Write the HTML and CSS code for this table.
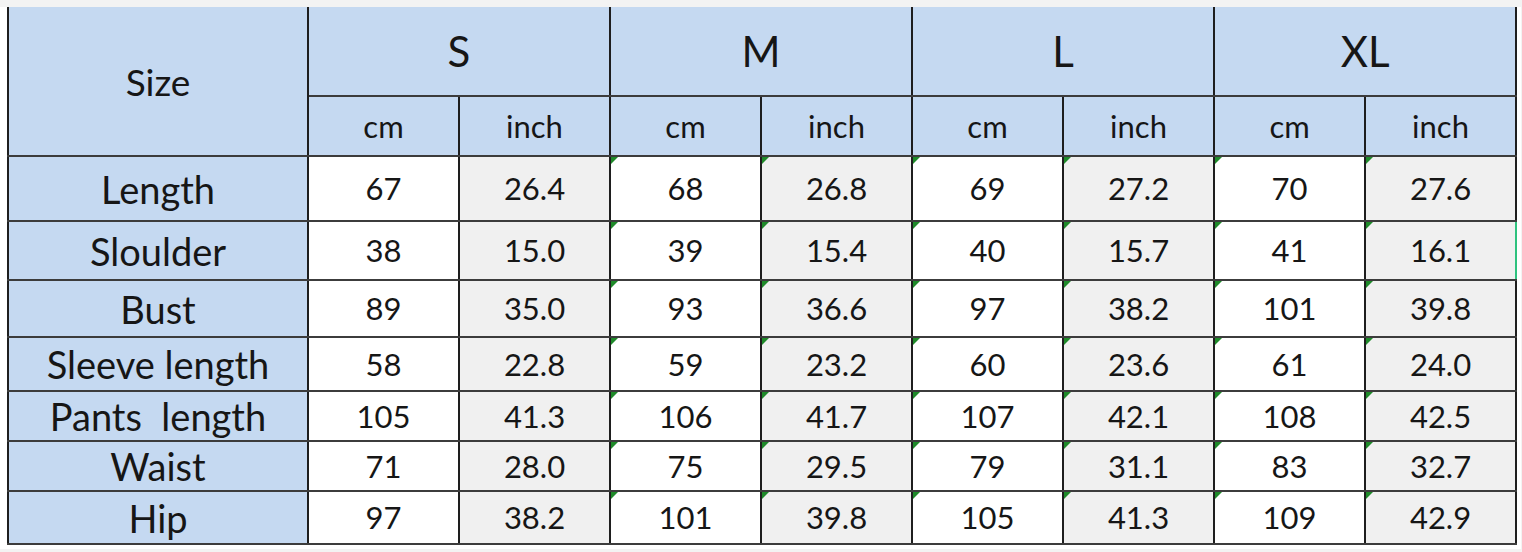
FILE: index.html
```html
<!DOCTYPE html>
<html>
<head>
<meta charset="utf-8">
<link rel="stylesheet" href="styles.css">
</head>
<body>
<div class="sheet">
<table class="size-table">
  <colgroup>
    <col class="c-label">
    <col class="c-val"><col class="c-val"><col class="c-val"><col class="c-val">
    <col class="c-val"><col class="c-val"><col class="c-val"><col class="c-val">
  </colgroup>
  <thead>
    <tr class="h1">
      <th rowspan="2" class="size-head">Size</th>
      <th colspan="2" class="size-name">S</th>
      <th colspan="2" class="size-name">M</th>
      <th colspan="2" class="size-name">L</th>
      <th colspan="2" class="size-name last">XL</th>
    </tr>
    <tr class="h2">
      <th class="unit">cm</th><th class="unit">inch</th>
      <th class="unit">cm</th><th class="unit">inch</th>
      <th class="unit">cm</th><th class="unit">inch</th>
      <th class="unit">cm</th><th class="unit last">inch</th>
    </tr>
  </thead>
  <tbody>
    <tr class="r-length">
      <th class="label">Length</th>
      <td class="cm">67</td><td class="in">26.4</td>
      <td class="cm mark">68</td><td class="in mark">26.8</td>
      <td class="cm mark">69</td><td class="in mark">27.2</td>
      <td class="cm mark">70</td><td class="in mark last">27.6</td>
    </tr>
    <tr class="r-shoulder">
      <th class="label">Sloulder</th>
      <td class="cm">38</td><td class="in">15.0</td>
      <td class="cm mark">39</td><td class="in mark">15.4</td>
      <td class="cm mark">40</td><td class="in mark">15.7</td>
      <td class="cm mark">41</td><td class="in mark last selected">16.1</td>
    </tr>
    <tr class="r-bust">
      <th class="label">Bust</th>
      <td class="cm">89</td><td class="in">35.0</td>
      <td class="cm mark">93</td><td class="in mark">36.6</td>
      <td class="cm mark">97</td><td class="in mark">38.2</td>
      <td class="cm mark">101</td><td class="in mark last">39.8</td>
    </tr>
    <tr class="r-sleeve">
      <th class="label">Sleeve length</th>
      <td class="cm">58</td><td class="in">22.8</td>
      <td class="cm mark">59</td><td class="in mark">23.2</td>
      <td class="cm mark">60</td><td class="in mark">23.6</td>
      <td class="cm mark">61</td><td class="in mark last">24.0</td>
    </tr>
    <tr class="r-pants">
      <th class="label">Pants&nbsp; length</th>
      <td class="cm">105</td><td class="in">41.3</td>
      <td class="cm mark">106</td><td class="in mark">41.7</td>
      <td class="cm mark">107</td><td class="in mark">42.1</td>
      <td class="cm mark">108</td><td class="in mark last">42.5</td>
    </tr>
    <tr class="r-waist">
      <th class="label">Waist</th>
      <td class="cm">71</td><td class="in">28.0</td>
      <td class="cm mark">75</td><td class="in mark">29.5</td>
      <td class="cm mark">79</td><td class="in mark">31.1</td>
      <td class="cm mark">83</td><td class="in mark last">32.7</td>
    </tr>
    <tr class="r-hip">
      <th class="label">Hip</th>
      <td class="cm">97</td><td class="in">38.2</td>
      <td class="cm mark">101</td><td class="in mark">39.8</td>
      <td class="cm mark">105</td><td class="in mark">41.3</td>
      <td class="cm mark">109</td><td class="in mark last">42.9</td>
    </tr>
  </tbody>
</table>
</div>
</body>
</html>
```
FILE: styles.css
```css
html, body {
  margin: 0;
  padding: 0;
}
body {
  background: #f3f3f3;
  font-family: "Lato", "Liberation Sans", sans-serif;
  color: #161616;
}
.sheet {
  display: inline-block;
  margin-top: 7px;
  padding: 0 4px 4px 7px;
  background: #ffffff;
}
.size-table {
  border-collapse: collapse;
  table-layout: fixed;
  width: 1508px;
}
.c-label { width: 300px; }
.c-val { width: 151px; }

.size-table th,
.size-table td {
  padding: 0;
  text-align: center;
  vertical-align: middle;
  border-left: 2px solid #1e1e1e;
  border-right: 2px solid #1e1e1e;
  border-top: 2px solid #3c3c3c;
  border-bottom: 2px solid #3c3c3c;
  font-weight: normal;
  position: relative;
  line-height: 1;
}

thead th {
  background: #c5d9f1;
}
.h1 { height: 89px; }
.h2 { height: 60px; }
.h1 th { border-top: none; }
.size-head {
  font-size: 37px;
  border-left: none;
  padding-top: 4px;
}
.size-name {
  font-size: 42px;
  border-bottom: 2px solid #66707c;
}
.unit {
  font-size: 31px;
  border-top: 2px solid #66707c;
  padding-top: 2px;
}

.label {
  background: #c5d9f1;
  font-size: 38px;
  border-left: none;
  padding-top: 3px;
}
tbody td {
  font-size: 31px;
  padding-top: 2px;
}
.cm { background: #ffffff; }
.in { background: #f0f0f0; }

.r-length { height: 65px; }
.r-shoulder { height: 59px; }
.r-bust { height: 57px; }
.r-sleeve { height: 54px; }
.r-pants { height: 50px; }
.r-waist { height: 50px; }
.r-hip { height: 53px; }

.mark::before {
  content: "";
  position: absolute;
  left: 0;
  top: 0;
  width: 0;
  height: 0;
  border-top: 7px solid #1f8a2a;
  border-right: 7px solid transparent;
}

.size-table .selected {
  border-right: 2px solid #2ec27e;
}
```
